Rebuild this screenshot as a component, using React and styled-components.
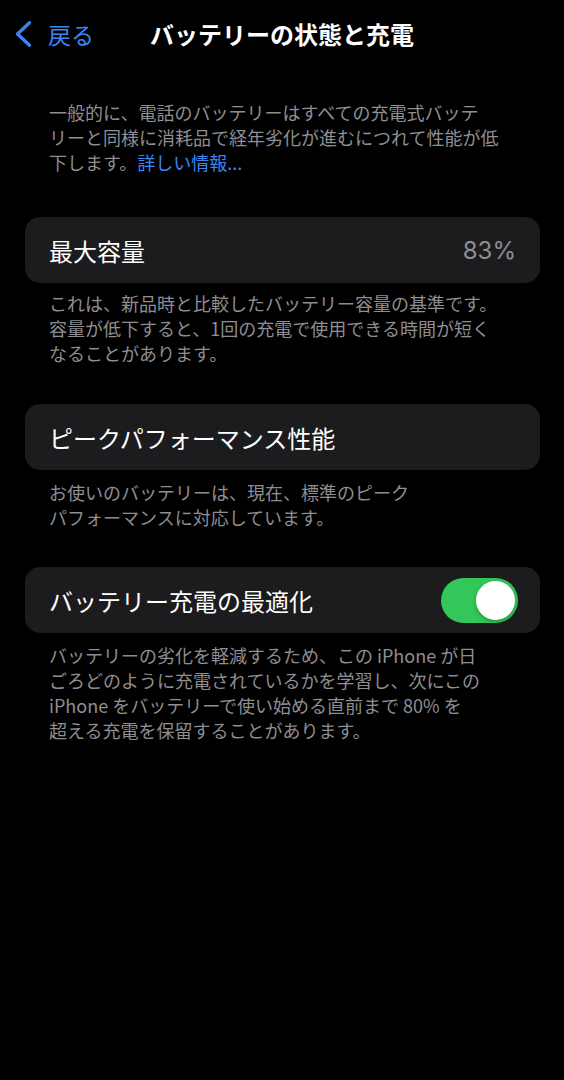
import React, { useState } from 'react'
import styled, { createGlobalStyle } from 'styled-components'

const GlobalStyle = createGlobalStyle`
    html, body {
        margin: 0;
        padding: 0;
        background: #000;
    }
    body {
        font-family: "Noto Sans CJK JP", "Noto Sans", sans-serif;
        -webkit-font-smoothing: antialiased;
    }
`

const Screen = styled.div`
    width: 564px;
    min-height: 1080px;
    background: #000;
    color: #fff;
    display: flex;
    flex-direction: column;
`

const NavBar = styled.header`
    height: 68px;
    display: grid;
    grid-template-columns: 1fr auto 1fr;
    align-items: center;
`

const BackButton = styled.button`
    justify-self: start;
    display: flex;
    align-items: center;
    gap: 16px;
    padding: 0 0 0 15px;
    border: 0;
    background: none;
    color: #3a86f7;
    font-family: inherit;
    font-size: 23px;
    line-height: 1;
    cursor: pointer;
`

const Title = styled.h1`
    margin: 0;
    font-size: 24px;
    font-weight: 700;
    line-height: 1;
    color: #fff;
`

const Content = styled.main`
    padding: 32px 24px 0 25px;
    display: flex;
    flex-direction: column;
`

const Caption = styled.p`
    margin: 0;
    padding: ${p => p.$top || 0}px 0 0 24px;
    font-size: 18px;
    line-height: 25px;
    color: #8e8e93;
`

const Line = styled.span`
    display: block;
`

// latin words in Japanese text get a little air on each side
const Latin = styled.span`
    margin: 0 4px 0 ${p => (p.$lead ? 0 : 4)}px;
`

const Link = styled.a`
    color: #3a86f7;
    text-decoration: none;
`

const Section = styled.section`
    margin-top: ${p => p.$gap}px;
`

const Card = styled.div`
    height: 66px;
    border-radius: 15px;
    background: #1c1c1e;
    display: flex;
    align-items: center;
    justify-content: space-between;
    padding: 0 22px 0 24px;
`

const Label = styled.span`
    font-size: 24px;
    color: #fff;
`

const Value = styled.span`
    font-family: Inter, "Noto Sans", sans-serif;
    font-size: 24px;
    color: #8e8e93;
    padding-right: 2px;
`

const Track = styled.button`
    width: 77px;
    height: 45px;
    border: 0;
    padding: 3px;
    border-radius: 23px;
    background: ${p => (p.$on ? '#33c759' : '#39393d')};
    display: flex;
    justify-content: ${p => (p.$on ? 'flex-end' : 'flex-start')};
    cursor: pointer;
`

const Knob = styled.span`
    width: 39px;
    height: 39px;
    border-radius: 50%;
    background: #fff;
    box-shadow: 0 2px 5px rgba(0, 0, 0, 0.25);
`

const Chevron = () => (
    <svg width="17" height="26" viewBox="0 0 17 26" fill="none">
        <polyline
            points="14.5,1.8 2.5,13 14.5,24.2"
            stroke="#3a86f7"
            strokeWidth="3.3"
            strokeLinecap="round"
            strokeLinejoin="round"
        />
    </svg>
)

const Lines = ({ lines }) => lines.map((l, i) => <Line key={i}>{l}</Line>)

const App = () => {
    const [optimized, setOptimized] = useState(true)

    return (
        <Screen>
            <GlobalStyle />
            <NavBar>
                <BackButton>
                    <Chevron />
                    戻る
                </BackButton>
                <Title>バッテリーの状態と充電</Title>
                <div />
            </NavBar>

            <Content>
                <Caption>
                    <Line>一般的に、電話のバッテリーはすべての充電式バッテ</Line>
                    <Line>リーと同様に消耗品で経年劣化が進むにつれて性能が低</Line>
                    <Line>
                        下します。<Link href="#">詳しい情報...</Link>
                    </Line>
                </Caption>

                <Section $gap={42}>
                    <Card>
                        <Label>最大容量</Label>
                        <Value>83%</Value>
                    </Card>
                    <Caption $top={8}>
                        <Lines
                            lines={[
                                'これは、新品時と比較したバッテリー容量の基準です。',
                                '容量が低下すると、1回の充電で使用できる時間が短く',
                                'なることがあります。',
                            ]}
                        />
                    </Caption>
                </Section>

                <Section $gap={38}>
                    <Card>
                        <Label>ピークパフォーマンス性能</Label>
                    </Card>
                    <Caption $top={10}>
                        <Lines
                            lines={[
                                'お使いのバッテリーは、現在、標準のピーク',
                                'パフォーマンスに対応しています。',
                            ]}
                        />
                    </Caption>
                </Section>

                <Section $gap={37}>
                    <Card>
                        <Label>バッテリー充電の最適化</Label>
                        <Track $on={optimized} onClick={() => setOptimized(!optimized)}>
                            <Knob />
                        </Track>
                    </Card>
                    <Caption $top={10}>
                        <Line>
                            バッテリーの劣化を軽減するため、この<Latin>iPhone</Latin>が日
                        </Line>
                        <Line>ごろどのように充電されているかを学習し、次にこの</Line>
                        <Line>
                            <Latin $lead>iPhone</Latin>をバッテリーで使い始める直前まで<Latin>80%</Latin>を
                        </Line>
                        <Line>超える充電を保留することがあります。</Line>
                    </Caption>
                </Section>
            </Content>
        </Screen>
    )
}

export default App
